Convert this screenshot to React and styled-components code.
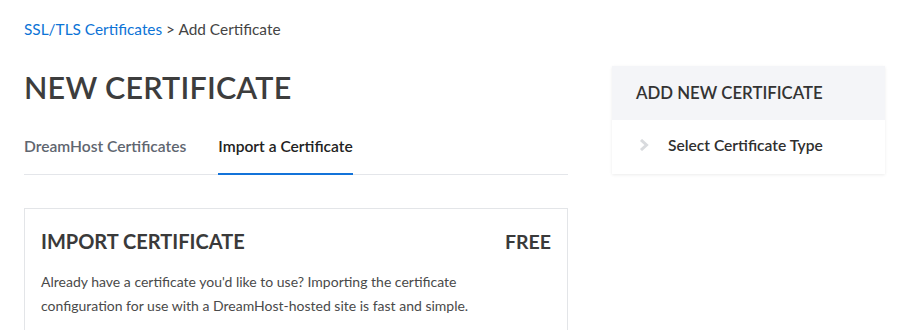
import React from 'react';
import styled, { createGlobalStyle } from 'styled-components';

const GlobalStyle = createGlobalStyle`
  body {
    margin: 0;
    background: #fff;
    font-family: 'Lato', 'Noto Sans', sans-serif;
    color: #333;
  }
`;

const Page = styled.div`
  display: grid;
  grid-template-columns: 544px 273px;
  column-gap: 44px;
  padding: 0 24px;
  width: 900px;
  height: 330px;
  box-sizing: border-box;
  overflow: hidden;
`;

const Main = styled.div`
  display: flex;
  flex-direction: column;
`;

const Crumbs = styled.div`
  font-size: 15.4px;
  color: #444;
  margin-top: 20px;
  line-height: 18px;
`;

const CrumbLink = styled.a`
  color: #0c73d6;
  text-decoration: none;
`;

const Title = styled.h1`
  margin: 29px 0 0;
  font-size: 30.5px;
  font-weight: 600;
  color: #3d3d3d;
  line-height: 40px;
  letter-spacing: 0.2px;
`;

const Tabs = styled.div`
  display: flex;
  gap: 32px;
  margin-top: 30px;
  border-bottom: 1px solid #e4e6ea;
`;

const Tab = styled.div`
  font-size: 15.6px;
  font-weight: 600;
  color: ${p => (p.active ? '#222' : '#5f6670')};
  padding-bottom: 18px;
  border-bottom: 2px solid ${p => (p.active ? '#1373d9' : 'transparent')};
  margin-bottom: -1px;
`;

const Card = styled.div`
  margin-top: 33px;
  border: 1px solid #e3e5e8;
  padding: 20px 16px 20px 16px;
`;

const CardHead = styled.div`
  display: flex;
  justify-content: space-between;
  align-items: baseline;
`;

const CardTitle = styled.h2`
  margin: 0;
  font-size: 20px;
  font-weight: 700;
  color: #3a3a3a;
`;

const Price = styled.span`
  font-size: 19.5px;
  font-weight: 700;
  color: #3a3a3a;
`;

const CardText = styled.p`
  margin: 17px 0 0;
  max-width: 445px;
  font-size: 14px;
  line-height: 24px;
  color: #4a4a4a;
`;

const Side = styled.aside`
  margin-top: 66px;
  align-self: start;
  background: #fff;
  box-shadow: 0 1px 3px rgba(0, 0, 0, 0.08);
`;

const SideHead = styled.div`
  background: #f4f5f8;
  padding: 17px 24px;
  font-size: 16.8px;
  font-weight: 600;
  color: #333;
  line-height: 20px;
`;

const SideRow = styled.div`
  display: flex;
  align-items: center;
  gap: 19px;
  padding: 16px 24px 20px 27px;
  font-size: 15.6px;
  font-weight: 600;
  color: #2f2f2f;
`;

const Chevron = () => (
  <svg width="10" height="12" viewBox="0 0 10 12">
    <path d="M2 1 L7.5 6 L2 11" fill="none" stroke="#d9dbde" strokeWidth="3" />
  </svg>
);

export default function App() {
  return (
    <>
      <GlobalStyle />
      <Page>
        <Main>
          <Crumbs>
            <CrumbLink href="#">SSL/TLS Certificates</CrumbLink> &gt; Add Certificate
          </Crumbs>
          <Title>NEW CERTIFICATE</Title>
          <Tabs>
            <Tab>DreamHost Certificates</Tab>
            <Tab active>Import a Certificate</Tab>
          </Tabs>
          <Card>
            <CardHead>
              <CardTitle>IMPORT CERTIFICATE</CardTitle>
              <Price>FREE</Price>
            </CardHead>
            <CardText>
              Already have a certificate you'd like to use? Importing the certificate
              configuration for use with a DreamHost-hosted site is fast and simple.
            </CardText>
          </Card>
        </Main>
        <Side>
          <SideHead>ADD NEW CERTIFICATE</SideHead>
          <SideRow>
            <Chevron />
            Select Certificate Type
          </SideRow>
        </Side>
      </Page>
    </>
  );
}
